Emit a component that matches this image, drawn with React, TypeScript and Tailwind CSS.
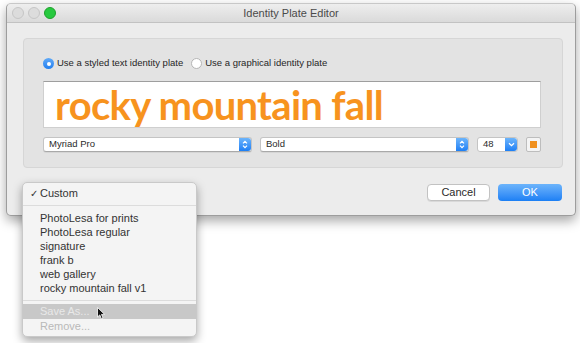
import React from "react";

const ui = { fontFamily: '"Liberation Sans", Arial, sans-serif' };

const Stepper = () => (
  <div className="flex h-full w-[12px] items-center justify-center rounded-r-[3px] bg-gradient-to-b from-[#6bb4fb] to-[#1b7ff5]">
    <svg width="6" height="9" viewBox="0 0 6 9" fill="none" stroke="white" strokeWidth="1.2">
      <path d="M1 3.3 L3 1.3 L5 3.3" />
      <path d="M1 5.7 L3 7.7 L5 5.7" />
    </svg>
  </div>
);

const Select = ({ label }: { label: string }) => (
  <div className="flex h-full w-[209px] items-stretch rounded-[3px] border border-[#c4c4c4] border-b-[#a9a9a9] bg-white shadow-[0_1px_0_rgba(0,0,0,0.06)]">
    <div className="flex flex-1 items-center pl-[5px] text-[9.5px] text-[#2a2a2a]">{label}</div>
    <Stepper />
  </div>
);

const menuItems = [
  "PhotoLesa for prints",
  "PhotoLesa regular",
  "signature",
  "frank b",
  "web gallery",
  "rocky mountain fall v1",
];

export default function App() {
  return (
    <div className="relative h-[343px] w-[580px] overflow-hidden bg-white pl-[6px] pt-[3px]" style={ui}>
      {/* window */}
      <div className="flex h-[213px] w-[570px] flex-col rounded-[5px] border border-[#9d9d9d] border-t-[#c8c8c8] bg-[#ececec] shadow-[0_5px_12px_rgba(0,0,0,0.35)]">
        <div className="flex h-[19px] items-center rounded-t-[5px] border-b border-[#c2c2c2] bg-gradient-to-b from-[#eeeeee] to-[#dadada]">
          <div className="flex w-[60px] items-center gap-[4px] pl-[5px]">
            <span className="h-[12px] w-[12px] rounded-full border border-[#c6c6c6] bg-[#dcdcdc]" />
            <span className="h-[12px] w-[12px] rounded-full border border-[#c6c6c6] bg-[#dcdcdc]" />
            <span className="h-[12px] w-[12px] rounded-full border border-[#1ea12c] bg-[#27c93f]" />
          </div>
          <div className="flex-1 text-center text-[11px] text-[#4a4a4a]">Identity Plate Editor</div>
          <div className="w-[60px]" />
        </div>

        {/* grouped panel */}
        <div className="ml-[16px] mt-[15px] h-[130px] w-[540px] rounded-[4px] border border-[#d6d6d6] bg-[#e3e3e3] pl-[19px] pt-[18px]">
          <div className="flex h-[13px] items-center text-[9.5px] text-[#262626]">
            <span className="flex h-[11px] w-[11px] items-center justify-center rounded-full bg-gradient-to-b from-[#5fa9f7] to-[#1f7ff0]">
              <span className="h-[4px] w-[4px] rounded-full bg-white" />
            </span>
            <span className="ml-[3px]">Use a styled text identity plate</span>
            <span className="ml-[8px] h-[11px] w-[11px] rounded-full border border-[#b5b5b5] bg-white" />
            <span className="ml-[3px]">Use a graphical identity plate</span>
          </div>

          <div className="mt-[11px] flex h-[47px] w-[498px] items-center border border-[#cfcfcf] border-t-[#9e9e9e] bg-white pl-[11px]">
            <span
              className="text-[40px] font-bold leading-none tracking-[-0.7px] text-[#f7931e]"
              style={{ fontFamily: 'Lato, sans-serif' }}
            >
              rocky mountain fall
            </span>
          </div>

          <div className="mt-[9px] flex h-[15px] items-center gap-[8px]">
            <Select label="Myriad Pro" />
            <Select label="Bold" />
            <div className="flex h-full w-[41px] items-stretch rounded-[3px] border border-[#c4c4c4] bg-white">
              <div className="flex flex-1 items-center pl-[5px] text-[9.5px] text-[#2a2a2a]">48</div>
              <div className="flex w-[12px] items-center justify-center rounded-r-[3px] bg-gradient-to-b from-[#6bb4fb] to-[#1b7ff5]">
                <svg width="7" height="5" viewBox="0 0 7 5" fill="none" stroke="white" strokeWidth="1.3">
                  <path d="M1 1.2 L3.5 3.7 L6 1.2" />
                </svg>
              </div>
            </div>
            <div className="flex h-full w-[15px] items-center justify-center rounded-[2px] border border-[#bdbdbd] bg-[#f4f4f4]">
              <span className="h-[7px] w-[7px] bg-[#f0901e]" />
            </div>
          </div>
        </div>

        <div className="mt-[16px] flex justify-end gap-[8px] pr-[13px]">
          <div className="flex h-[17px] w-[63px] items-center justify-center rounded-[4px] border border-[#c2c2c2] bg-white text-[11px] text-[#2a2a2a] shadow-[0_1px_0_rgba(0,0,0,0.08)]">
            Cancel
          </div>
          <div className="flex h-[17px] w-[64px] items-center justify-center rounded-[4px] bg-gradient-to-b from-[#6cb4fb] to-[#1a7ff4] text-[11px] text-white">
            OK
          </div>
        </div>
      </div>

      {/* popup menu */}
      <div className="absolute left-[22px] top-[182px] w-[175px] rounded-[5px] border border-[#c9c9c9] bg-[#f4f4f4] pb-[2px] pt-[3px] text-[11px] text-[#333333] shadow-[0_4px_10px_rgba(0,0,0,0.35)]">
        <div className="flex h-[14px] items-center">
          <span className="w-[17px] pl-[7px] text-[10px]">✓</span>
          <span>Custom</span>
        </div>
        <div className="my-[5px] h-px bg-[#dcdcdc]" />
        {menuItems.map((item) => (
          <div key={item} className="flex h-[14px] items-center pl-[17px]">
            {item}
          </div>
        ))}
        <div className="mb-[3px] mt-[5px] h-px bg-[#dcdcdc]" />
        <div className="relative flex h-[15px] items-center bg-[#c8c8c8] pl-[17px] text-[#e9e9e9]">
          Save As...
          <svg className="absolute left-[74px] top-[3px]" width="9" height="13" viewBox="0 0 9 13">
            <path d="M0.5 0.5 L0.5 10 L2.8 7.9 L4.4 11.8 L6 11.1 L4.5 7.4 L7.6 7.4 Z" fill="#111" stroke="white" strokeWidth="0.8" />
          </svg>
        </div>
        <div className="flex h-[15px] items-center pl-[17px] text-[#b9b9b9]">Remove...</div>
      </div>
    </div>
  );
}
